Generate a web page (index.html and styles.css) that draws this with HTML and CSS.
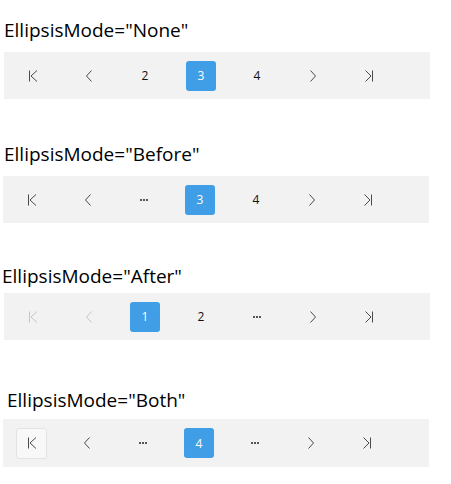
FILE: index.html
```html
<!DOCTYPE html>
<html>
<head>
<meta charset="utf-8">
<link rel="stylesheet" href="styles.css">
</head>
<body>
<section class="demo demo-none">
  <h2 class="demo-title">EllipsisMode="None"</h2>
  <nav class="pager">
    <span class="pg-item"><svg class="ico" viewBox="0 0 14 14"><path d="M3.5 1.5V12.5M11 1.5L5 7L11 12.5"/></svg></span>
    <span class="pg-item"><svg class="ico" viewBox="0 0 14 14"><path d="M9.5 1.5L4.5 7L9.5 12.5"/></svg></span>
    <span class="pg-item">2</span>
    <span class="pg-item is-current">3</span>
    <span class="pg-item">4</span>
    <span class="pg-item"><svg class="ico" viewBox="0 0 14 14"><path d="M4.5 1.5L9.5 7L4.5 12.5"/></svg></span>
    <span class="pg-item"><svg class="ico" viewBox="0 0 14 14"><path d="M3.5 1.5L9 7L3.5 12.5M10.5 1.5V12.5"/></svg></span>
  </nav>
</section>

<section class="demo demo-before">
  <h2 class="demo-title">EllipsisMode="Before"</h2>
  <nav class="pager">
    <span class="pg-item"><svg class="ico" viewBox="0 0 14 14"><path d="M3.5 1.5V12.5M11 1.5L5 7L11 12.5"/></svg></span>
    <span class="pg-item"><svg class="ico" viewBox="0 0 14 14"><path d="M9.5 1.5L4.5 7L9.5 12.5"/></svg></span>
    <span class="pg-item"><svg class="dots" viewBox="0 0 8 2"><rect x="0" y="0" width="2" height="2"/><rect x="3" y="0" width="2" height="2"/><rect x="6" y="0" width="2" height="2"/></svg></span>
    <span class="pg-item is-current">3</span>
    <span class="pg-item">4</span>
    <span class="pg-item"><svg class="ico" viewBox="0 0 14 14"><path d="M4.5 1.5L9.5 7L4.5 12.5"/></svg></span>
    <span class="pg-item"><svg class="ico" viewBox="0 0 14 14"><path d="M3.5 1.5L9 7L3.5 12.5M10.5 1.5V12.5"/></svg></span>
  </nav>
</section>

<section class="demo demo-after">
  <h2 class="demo-title">EllipsisMode="After"</h2>
  <nav class="pager">
    <span class="pg-item is-disabled"><svg class="ico" viewBox="0 0 14 14"><path d="M3.5 1.5V12.5M11 1.5L5 7L11 12.5"/></svg></span>
    <span class="pg-item is-disabled"><svg class="ico" viewBox="0 0 14 14"><path d="M9.5 1.5L4.5 7L9.5 12.5"/></svg></span>
    <span class="pg-item is-current">1</span>
    <span class="pg-item">2</span>
    <span class="pg-item"><svg class="dots" viewBox="0 0 8 2"><rect x="0" y="0" width="2" height="2"/><rect x="3" y="0" width="2" height="2"/><rect x="6" y="0" width="2" height="2"/></svg></span>
    <span class="pg-item"><svg class="ico" viewBox="0 0 14 14"><path d="M4.5 1.5L9.5 7L4.5 12.5"/></svg></span>
    <span class="pg-item"><svg class="ico" viewBox="0 0 14 14"><path d="M3.5 1.5L9 7L3.5 12.5M10.5 1.5V12.5"/></svg></span>
  </nav>
</section>

<section class="demo demo-both">
  <h2 class="demo-title">EllipsisMode="Both"</h2>
  <nav class="pager">
    <span class="pg-item is-hover"><svg class="ico" viewBox="0 0 14 14"><path d="M3.5 1.5V12.5M11 1.5L5 7L11 12.5"/></svg></span>
    <span class="pg-item"><svg class="ico" viewBox="0 0 14 14"><path d="M9.5 1.5L4.5 7L9.5 12.5"/></svg></span>
    <span class="pg-item"><svg class="dots" viewBox="0 0 8 2"><rect x="0" y="0" width="2" height="2"/><rect x="3" y="0" width="2" height="2"/><rect x="6" y="0" width="2" height="2"/></svg></span>
    <span class="pg-item is-current">4</span>
    <span class="pg-item"><svg class="dots" viewBox="0 0 8 2"><rect x="0" y="0" width="2" height="2"/><rect x="3" y="0" width="2" height="2"/><rect x="6" y="0" width="2" height="2"/></svg></span>
    <span class="pg-item"><svg class="ico" viewBox="0 0 14 14"><path d="M4.5 1.5L9.5 7L4.5 12.5"/></svg></span>
    <span class="pg-item"><svg class="ico" viewBox="0 0 14 14"><path d="M3.5 1.5L9 7L3.5 12.5M10.5 1.5V12.5"/></svg></span>
  </nav>
</section>
</body>
</html>
```

FILE: styles.css
```css
html, body {
  margin: 0;
  padding: 0;
  background: #ffffff;
}

body {
  font-family: "Open Sans", "Noto Sans", sans-serif;
  color: #000000;
}

.demo {
  display: flex;
  flex-direction: column;
}

.demo-title {
  margin: 0;
  font-size: 19px;
  font-weight: 400;
  line-height: 24px;
  padding-left: 4px;
}

.pager {
  display: flex;
  align-items: center;
  gap: 26px;
  width: 426px;
  height: 47px;
  box-sizing: border-box;
  padding-left: 14px;
  margin-left: 4px;
  background: #f2f2f2;
}

.pg-item {
  width: 30px;
  height: 30px;
  flex: none;
  box-sizing: border-box;
  display: flex;
  align-items: center;
  justify-content: center;
  font-size: 12px;
  color: #111111;
  border-radius: 3px;
}

.ico {
  width: 14px;
  height: 14px;
  fill: none;
  stroke: #4a4a4a;
  stroke-width: 1;
}

.dots {
  width: 8px;
  height: 2px;
  fill: #555555;
}

.is-current {
  background: #409ee6;
  color: #ffffff;
}

.is-disabled .ico {
  stroke: #c4c4c4;
}

.is-hover {
  width: 31px;
  height: 31px;
  margin-left: -1px;
  margin-right: -1px;
  background: #f8f8f8;
  border: 1px solid #e3e3e3;
}

.demo-none .demo-title { margin-top: 18px; }
.demo-none .pager { margin-top: 10px; }

.demo-before .demo-title { margin-top: 43px; }
.demo-before .pager { margin-top: 10px; margin-left: 3px; }

.demo-after .demo-title { margin-top: 41px; padding-left: 2px; }
.demo-after .pager { margin-top: 5px; }

.demo-both .demo-title { margin-top: 48px; padding-left: 7px; }
.demo-both .pager { margin-top: 7px; margin-left: 3px; height: 48px; }
```
